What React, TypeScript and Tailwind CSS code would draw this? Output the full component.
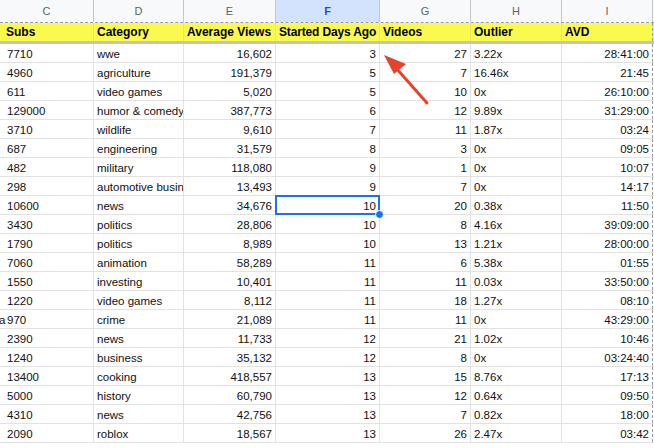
import React from "react";

const rows: [string, string, string, string, string, string, string][] = [
  ["7710", "wwe", "16,602", "3", "27", "3.22x", "28:41:00"],
  ["4960", "agriculture", "191,379", "5", "7", "16.46x", "21:45"],
  ["611", "video games", "5,020", "5", "10", "0x", "26:10:00"],
  ["129000", "humor & comedy", "387,773", "6", "12", "9.89x", "31:29:00"],
  ["3710", "wildlife", "9,610", "7", "11", "1.87x", "03:24"],
  ["687", "engineering", "31,579", "8", "3", "0x", "09:05"],
  ["482", "military", "118,080", "9", "1", "0x", "10:07"],
  ["298", "automotive business", "13,493", "9", "7", "0x", "14:17"],
  ["10600", "news", "34,676", "10", "20", "0.38x", "11:50"],
  ["3430", "politics", "28,806", "10", "8", "4.16x", "39:09:00"],
  ["1790", "politics", "8,989", "10", "13", "1.21x", "28:00:00"],
  ["7060", "animation", "58,289", "11", "6", "5.38x", "01:55"],
  ["1550", "investing", "10,401", "11", "11", "0.03x", "33:50:00"],
  ["1220", "video games", "8,112", "11", "18", "1.27x", "08:10"],
  ["970", "crime", "21,089", "11", "11", "0x", "43:29:00"],
  ["2390", "news", "11,733", "12", "21", "1.02x", "10:46"],
  ["1240", "business", "35,132", "12", "8", "0x", "03:24:40"],
  ["13400", "cooking", "418,557", "13", "15", "8.76x", "17:13"],
  ["5000", "history", "60,790", "13", "12", "0.64x", "09:50"],
  ["4310", "news", "42,756", "13", "7", "0.82x", "18:00"],
  ["2090", "roblox", "18,567", "13", "26", "2.47x", "03:42"],
];

const cols = "grid grid-cols-[94px_90px_92px_104px_91px_91px_91px_1fr]";
const letters = ["C", "D", "E", "F", "G", "H", "I"];
const headers = ["Subs", "Category", "Average Views", "Started Days Ago", "Videos", "Outlier", "AVD"];

export default function App() {
  return (
    <div
      className="relative w-[654px] h-[448px] overflow-hidden bg-white text-[11.5px] text-[#111]"
      style={{ fontFamily: '"Liberation Sans", Arial, sans-serif' }}
    >
      {/* column letters */}
      <div className={`${cols} h-[23px] bg-[#f8f9fa] border-b border-dashed border-[#9a9a9a]`}>
        {letters.map((l) => (
          <div
            key={l}
            className={`flex items-center justify-center border-r border-[#c4c7c5] text-[11px] ${
              l === "F" ? "bg-[#d3e3fd] text-[#0b57d0] font-bold" : "text-[#5f6368]"
            }`}
          >
            {l}
          </div>
        ))}
        <div />
      </div>
      {/* header row */}
      <div className={`${cols} h-[21px] bg-[#fafa4c] border-b-[3px] border-[#c3c3c3]`}>
        {headers.map((h, i) => (
          <div
            key={h}
            className={`flex items-center ${i === 0 ? "pl-[6px]" : "pl-[3px]"} pt-[1px] text-[12px] font-bold leading-[17px] whitespace-nowrap overflow-hidden text-black ${
              i === 3 ? "tracking-[-0.15px]" : ""
            } ${i === 6 ? "border-r border-dashed border-r-[#9a9a9a]" : "border-r border-[#e8e860]"}`}
          >
            {h}
          </div>
        ))}
        <div />
      </div>
      {/* data */}
      {rows.map((r, ri) => (
        <div key={ri} className={`${cols} h-[19px] border-b border-[#e2e2e2]`}>
          {r.map((v, ci) => {
            const right = ci === 2 || ci === 3 || ci === 4 || ci === 6;
            const selected = ri === 8 && ci === 3;
            return (
              <div
                key={ci}
                className={`relative flex items-center pt-[2px] leading-[16px] whitespace-nowrap ${
                  ci === 0 || selected ? "overflow-visible" : "overflow-hidden"
                } ${selected ? "z-10" : ""} ${right ? "justify-end pr-[3px]" : ci === 0 ? "pl-[7px]" : "pl-[3px]"} ${
                  ci === 6 ? "border-r border-dashed border-r-[#9a9a9a]" : "border-r border-[#e2e2e2]"
                }`}
              >
                {ri === 14 && ci === 0 ? (
                  <span className="absolute left-[-1px] top-[2px] leading-[16px]">a</span>
                ) : null}
                {v}
                {selected ? (
                  <>
                    <div className="absolute left-[-1px] top-[-1px] right-[-1px] bottom-[-1px] border-2 border-[#1a73e8]" />
                    <div className="absolute right-[-5px] bottom-[-5px] w-[9px] h-[9px] rounded-full bg-[#1a73e8] border border-white" />
                  </>
                ) : null}
              </div>
            );
          })}
          <div />
        </div>
      ))}
      {/* red arrow */}
      <svg className="absolute left-0 top-0 pointer-events-none" width="654" height="448" viewBox="0 0 654 448">
        <line x1="427" y1="103" x2="396" y2="68" stroke="#e5432d" strokeWidth="3" strokeLinecap="round" />
        <polygon points="384,55 406,64 394,74" fill="#e5432d" />
      </svg>
    </div>
  );
}
